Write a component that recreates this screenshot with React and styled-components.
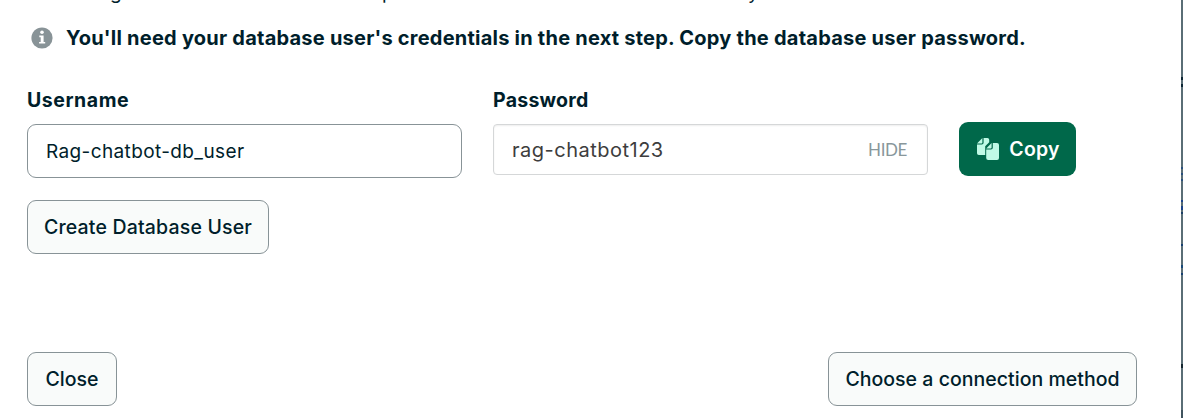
import React from 'react';
import styled, { createGlobalStyle } from 'styled-components';

const Global = createGlobalStyle`
  * { box-sizing: border-box; }
  html, body { margin: 0; background: #fff; overflow: hidden; }
  body { font-family: Inter, "Liberation Sans", sans-serif; color: #001e2b; }
`;

const Screen = styled.div`
  display: flex;
  width: 1183px;
  height: 418px;
  overflow: hidden;
`;

const Dialog = styled.main`
  flex: 1;
  display: flex;
  flex-direction: column;
  padding: 0 44px 0 27px;
`;

const Intro = styled.p`
  display: flex;
  margin: -21px 0 0;
  height: 28px;
  font-size: 19px;
  line-height: 28px;
  white-space: pre;
`;

const Phrase = styled.span`
  flex: none;
  width: ${(p) => p.$width}px;
  letter-spacing: ${(p) => p.$spacing || 0}px;
`;

const Notice = styled.div`
  display: flex;
  align-items: center;
  gap: 13px;
  height: 28px;
  margin-top: 17px;
  padding-left: 4px;
  font-size: 20px;
  font-weight: 700;
  white-space: nowrap;
  svg { flex: none; }
`;

const Fit = styled.span`
  letter-spacing: ${(p) => p.$spacing}px;
  white-space: nowrap;
`;

const Fields = styled.div`
  display: flex;
  align-items: flex-start;
  margin-top: 36px;
  gap: 31px;
`;

const Field = styled.div`
  display: flex;
  flex-direction: column;
  width: 435px;
`;

const Label = styled.label`
  height: 24px;
  margin-bottom: 12px;
  font-size: 19.5px;
  line-height: 24px;
  font-weight: 700;
`;

const UserBox = styled.div`
  display: flex;
  align-items: center;
  height: 54px;
  padding: 0 18px;
  border: 1px solid #889397;
  border-radius: 9px;
  font-size: 19px;
`;

const PasswordBox = styled.div`
  display: flex;
  align-items: center;
  justify-content: space-between;
  height: 51px;
  padding: 0 20px 0 18px;
  border: 1px solid #d5d7d8;
  border-radius: 4px;
  box-shadow: inset 0 1px 2px rgba(0, 0, 0, 0.07);
  color: #3d3d3d;
  font-size: 20px;
`;

const Toggle = styled.span`
  color: #89979b;
  font-family: Lato, sans-serif;
  font-size: 17px;
  letter-spacing: -0.4px;
`;

const Button = styled.button`
  display: flex;
  align-items: center;
  justify-content: center;
  flex: none;
  width: ${(p) => p.$width}px;
  height: 54px;
  padding: 0;
  border: 1px solid #889397;
  border-radius: 9px;
  background: #f9fbfa;
  color: #001e2b;
  font: 500 19.5px Inter, "Liberation Sans", sans-serif;
`;

const CopyButton = styled(Button)`
  gap: 10px;
  margin-top: 34px;
  padding-left: 2px;
  border: 0;
  background: #00684a;
  color: #fff;
  font-weight: 600;
`;

const CreateRow = styled.div`
  display: flex;
  margin-top: 22px;
`;

const Footer = styled.footer`
  display: flex;
  justify-content: space-between;
  margin-top: 98px;
`;

const Backdrop = styled.aside`
  width: 2px;
  background: #5a6e76;
`;

const marks = [
  [77, 3, '#0b2533'], [84, 3, '#0b2533'], [167, 2, '#294f7c'], [173, 2, '#294f7c'],
  [179, 2, '#294f7c'], [200, 2, '#1c4489'], [206, 4, '#1c4489'], [212, 2, '#1c3f66'],
  [244, 2, '#173f70'], [265, 3, '#174878'], [273, 2, '#173f70'], [364, 4, '#14252f'], [410, 8, '#40545e'],
];

const InfoIcon = () => (
  <svg width="22" height="22" viewBox="0 0 22 22">
    <circle cx="11" cy="11" r="10.6" fill="#889397" />
    <circle cx="11" cy="5.3" r="1.8" fill="#fff" />
    <path d="M8.3 8.6h4.3v6.3h1.6v1.7H8.1v-1.7h1.6v-4.6H8.3z" fill="#fff" />
  </svg>
);

const CopyIcon = () => (
  <svg width="22" height="22" viewBox="0 0 22 22" fill="#c0fae6">
    <path d="M5.4 0v4.5a.9.9 0 0 1-.9.9H0z" />
    <path d="M6.6 0H10.4a1.8 1.8 0 0 1 1.8 1.8v2.4L8.2 8.2V17H1.8A1.8 1.8 0 0 1 0 15.2V6.6h4.8a1.8 1.8 0 0 0 1.8-1.8z" />
    <path d="M14.6 5v4.5a.9.9 0 0 1-.9.9H9.2z" />
    <path d="M15.8 5H20a2 2 0 0 1 2 2v13a2 2 0 0 1-2 2h-8.8a2 2 0 0 1-2-2v-8.4H14a1.8 1.8 0 0 0 1.8-1.8z" />
  </svg>
);

export default function App() {
  return (
    <Screen>
      <Global />
      <Dialog>
        <Intro>
          <Phrase $width={83} $spacing={0.8}>We auto</Phrase>
          <Phrase $width={272} $spacing={0.9}>generated a username and </Phrase>
          <Phrase $width={366} $spacing={0.8}>password. You can use this or create </Phrase>
          <Phrase $width={100}>your own.</Phrase>
        </Intro>
        <Notice>
          <InfoIcon />
          <Fit $spacing={0.23}>You'll need your database user's credentials in the next step. Copy the database user password.</Fit>
        </Notice>
        <Fields>
          <Field>
            <Label><Fit $spacing={0.55}>Username</Fit></Label>
            <UserBox><Fit $spacing={0.38}>Rag-chatbot-db_user</Fit></UserBox>
          </Field>
          <Field>
            <Label><Fit $spacing={0.25}>Password</Fit></Label>
            <PasswordBox>
              <Fit $spacing={0.5}>rag-chatbot123</Fit>
              <Toggle>HIDE</Toggle>
            </PasswordBox>
          </Field>
          <CopyButton $width={117}><CopyIcon /><Fit $spacing={0.2}>Copy</Fit></CopyButton>
        </Fields>
        <CreateRow>
          <Button $width={242}><Fit $spacing={0.17}>Create Database User</Fit></Button>
        </CreateRow>
        <Footer>
          <Button $width={90}><Fit $spacing={0}>Close</Fit></Button>
          <Button $width={309}><Fit $spacing={0.03}>Choose a connection method</Fit></Button>
        </Footer>
      </Dialog>
      <Backdrop>
        <svg width="2" height="418" style={{ display: 'block' }}>
          {marks.map(([y, h, c]) => <rect key={y} y={y} width="2" height={h} fill={c} />)}
        </svg>
      </Backdrop>
    </Screen>
  );
}
